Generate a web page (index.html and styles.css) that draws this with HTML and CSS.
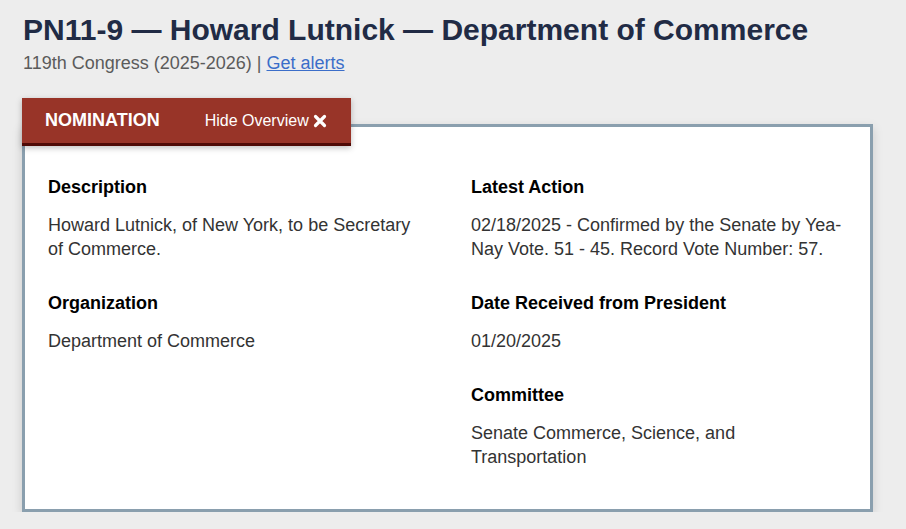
FILE: index.html
```html
<!DOCTYPE html>
<html lang="en">
<head>
    <meta charset="UTF-8">
    <meta name="viewport" content="width=device-width, initial-scale=1.0">
    <title>PN11-9 — Howard Lutnick</title>
    <link rel="stylesheet" href="styles.css">
</head>
<body>
    <div class="page">
        <h1 class="page-title">PN11-9 — Howard Lutnick — Department of Commerce</h1>
        <p class="congress">119th Congress (2025-2026) | <a href="#">Get alerts</a></p>

        <div class="overview">
            <div class="overview-tab">
                <span class="tab-label">NOMINATION</span>
                <a href="#" class="hide-overview">Hide Overview
                    <svg class="close-icon" viewBox="0 0 14 14" width="14" height="14">
                        <path d="M2.5 2.5 L11.5 11.5 M11.5 2.5 L2.5 11.5" stroke="#fff" stroke-width="3.2" stroke-linecap="round"/>
                    </svg>
                </a>
            </div>
            <div class="overview-card">
                <div class="overview-col">
                    <div class="field">
                        <h3>Description</h3>
                        <p>Howard Lutnick, of New York, to be Secretary of Commerce.</p>
                    </div>
                    <div class="field">
                        <h3>Organization</h3>
                        <p>Department of Commerce</p>
                    </div>
                </div>
                <div class="overview-col">
                    <div class="field">
                        <h3>Latest Action</h3>
                        <p>02/18/2025 - Confirmed by the Senate by Yea-Nay Vote. 51 - 45. Record Vote Number: 57.</p>
                    </div>
                    <div class="field">
                        <h3>Date Received from President</h3>
                        <p>01/20/2025</p>
                    </div>
                    <div class="field">
                        <h3>Committee</h3>
                        <p>Senate Commerce, Science, and Transportation</p>
                    </div>
                </div>
            </div>
        </div>
    </div>
</body>
</html>
```

FILE: styles.css
```css
body {
    margin: 0;
    font-family: "Liberation Sans", Arial, sans-serif;
    background-color: #ededed;
    color: #333;
}
.page {
    padding: 12px 33px 0 22px;
}
.page-title {
    margin: 0 0 0 1px;
    font-size: 30px;
    line-height: 36px;
    color: #212b45;
}
.congress {
    margin: 4px 0 0 1px;
    font-size: 18px;
    line-height: 22px;
    color: #5b5b5b;
}
.congress a {
    color: #3b6ec9;
}
.overview {
    position: relative;
    margin-top: 24px;
    padding-top: 26px;
}
.overview-tab {
    position: absolute;
    top: 0;
    left: 0;
    width: 329px;
    height: 45px;
    display: flex;
    align-items: center;
    background-color: #983428;
    border-bottom: 3px solid #4f0a06;
    box-shadow: 0 2px 6px rgba(0, 0, 0, 0.25);
    z-index: 2;
}
.tab-label {
    margin-left: 23px;
    font-size: 18px;
    font-weight: bold;
    color: #fff;
}
.hide-overview {
    margin-left: 45px;
    display: flex;
    align-items: center;
    gap: 4px;
    font-size: 16px;
    color: #fff;
    text-decoration: none;
}
.overview-card {
    display: grid;
    grid-template-columns: 376px 376px;
    column-gap: 47px;
    padding: 48px 23px 40px;
    background: #fff;
    border: 3px solid #8a9fae;
    box-shadow: 0 4px 10px rgba(0, 0, 0, 0.15);
}
.field {
    margin-bottom: 30px;
}
.field:last-child {
    margin-bottom: 0;
}
.field h3 {
    margin: 0 0 14px;
    font-size: 18px;
    line-height: 24px;
    color: #000;
}
.field p {
    margin: 0;
    font-size: 18px;
    line-height: 24px;
    color: #333;
}
```
